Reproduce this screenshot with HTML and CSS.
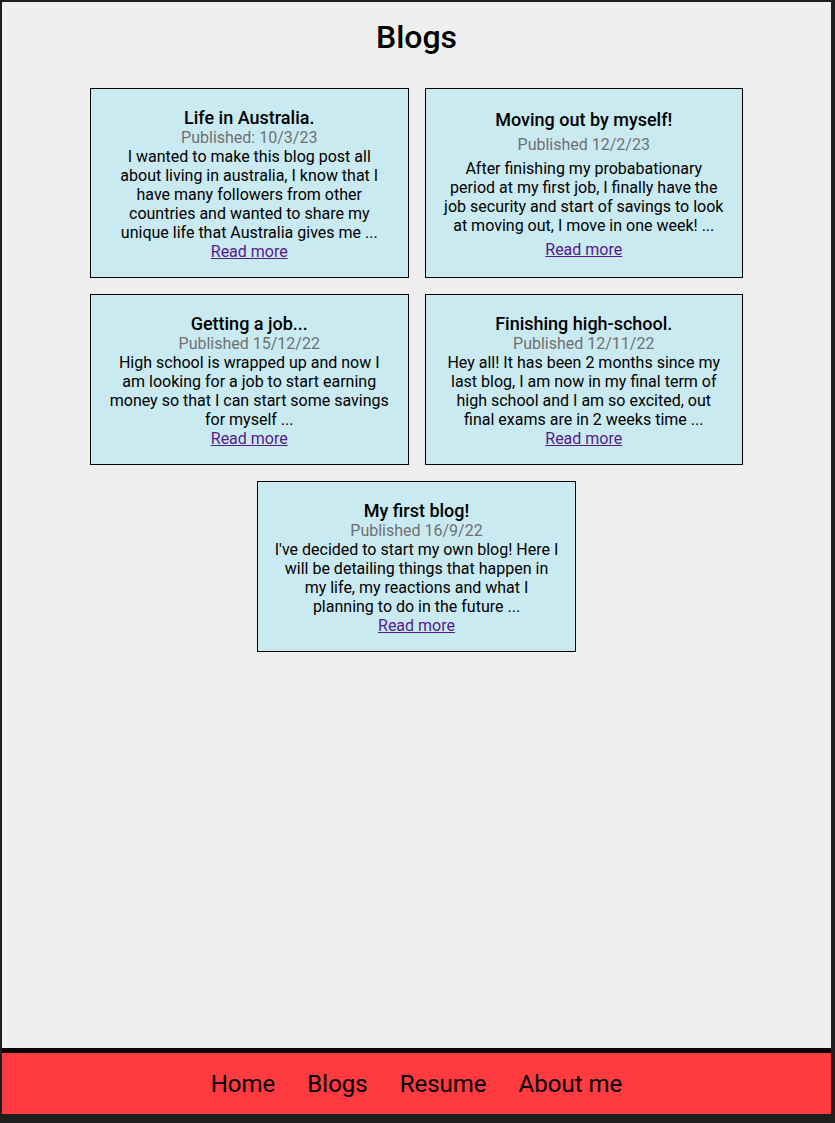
FILE: index.html
```html
<!DOCTYPE html>
<html lang="en">
<head>
<meta charset="utf-8">
<title>Blogs</title>
<link rel="stylesheet" href="styles.css">
</head>
<body>
<div class="page">
  <main class="main">
    <h1 class="page-title">Blogs</h1>
    <section class="cards">
      <article class="card">
        <h2 class="card-title">Life in Australia.</h2>
        <p class="card-date">Published: 10/3/23</p>
        <p class="card-text">I wanted to make this blog post all about living in australia, I know that I have many followers from other countries and wanted to share my unique life that Australia gives me ...</p>
        <a class="card-link" href="#">Read more</a>
      </article>
      <article class="card">
        <h2 class="card-title">Moving out by myself!</h2>
        <p class="card-date">Published 12/2/23</p>
        <p class="card-text">After finishing my probabationary period at my first job, I finally have the job security and start of savings to look at moving out, I move in one week! ...</p>
        <a class="card-link" href="#">Read more</a>
      </article>
      <article class="card">
        <h2 class="card-title">Getting a job...</h2>
        <p class="card-date">Published 15/12/22</p>
        <p class="card-text">High school is wrapped up and now I am looking for a job to start earning money so that I can start some savings for myself ...</p>
        <a class="card-link" href="#">Read more</a>
      </article>
      <article class="card">
        <h2 class="card-title">Finishing high-school.</h2>
        <p class="card-date">Published 12/11/22</p>
        <p class="card-text">Hey all! It has been 2 months since my last blog, I am now in my final term of high school and I am so excited, out final exams are in 2 weeks time ...</p>
        <a class="card-link" href="#">Read more</a>
      </article>
      <article class="card">
        <h2 class="card-title">My first blog!</h2>
        <p class="card-date">Published 16/9/22</p>
        <p class="card-text">I've decided to start my own blog! Here I will be detailing things that happen in my life, my reactions and what I planning to do in the future ...</p>
        <a class="card-link" href="#">Read more</a>
      </article>
    </section>
  </main>
  <footer class="footer">
    <nav class="nav">
      <a class="nav-link" href="#">Home</a>
      <a class="nav-link" href="#">Blogs</a>
      <a class="nav-link" href="#">Resume</a>
      <a class="nav-link" href="#">About me</a>
    </nav>
  </footer>
</div>
</body>
</html>
```

FILE: styles.css
```css
* {
  box-sizing: border-box;
}

html, body {
  margin: 0;
  padding: 0;
}

body {
  background: #1e1e1e;
  font-family: Roboto, "Liberation Sans", sans-serif;
  color: #000;
  height: 1123px;
  overflow: hidden;
}

.page {
  margin: 2px 4px 0 2px;
  display: flex;
  flex-direction: column;
}

.main {
  background: #efefef;
  height: 1046px;
  padding-top: 17px;
}

.page-title {
  margin: 0 0 32px;
  text-align: center;
  font-size: 32px;
  font-weight: 500;
  line-height: 37px;
}

.cards {
  width: 653px;
  margin: 0 auto;
  display: flex;
  flex-wrap: wrap;
  justify-content: center;
  gap: 16px;
}

.card {
  width: 318.5px;
  background: #caeaf2;
  border: 1px solid #000;
  padding: 18px 16px 16px;
  display: flex;
  flex-direction: column;
  justify-content: space-around;
  align-items: center;
  text-align: center;
}

.card-title {
  margin: 0;
  font-size: 18px;
  font-weight: 500;
  line-height: 21px;
}

.card-date {
  margin: 0;
  font-size: 16px;
  line-height: 19px;
  color: #707070;
}

.card-text {
  margin: 0;
  font-size: 16px;
  line-height: 19px;
}

.card-link {
  font-size: 16px;
  line-height: 19px;
  color: #551a8b;
}

.footer {
  background: #ff3b3f;
  border-top: 5px solid #000;
  height: 66px;
  display: flex;
  align-items: center;
  justify-content: center;
}

.nav {
  display: flex;
  gap: 32px;
}

.nav-link {
  font-size: 24px;
  line-height: 28px;
  color: #000;
  text-decoration: none;
}
```
